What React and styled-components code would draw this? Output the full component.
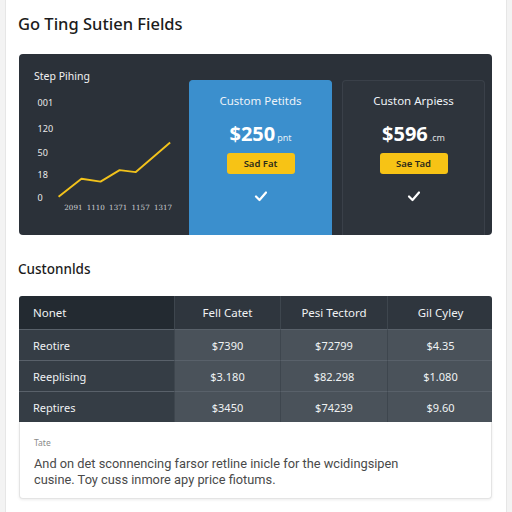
import React from 'react';
import styled, { createGlobalStyle } from 'styled-components';

const GlobalStyle = createGlobalStyle`
  html, body {
    margin: 0;
    padding: 0;
    background: #f3f3f3;
    font-family: 'Noto Sans', 'Open Sans', sans-serif;
  }
`;

const Page = styled.div`
  width: 502px;
  height: 512px;
  margin: 0 auto;
  background: #ffffff;
  border-left: 1px solid #e6e6e6;
  border-right: 1px solid #e6e6e6;
  box-sizing: border-box;
  padding: 12px 12px 0 12px;
  display: flex;
  flex-direction: column;
`;

const Title = styled.h1`
  margin: 0;
  font-size: 16.5px;
  font-weight: 500;
  color: #1b1b1b;
  line-height: 24px;
`;

const Panel = styled.div`
  margin: 18px 2px 0 1px;
  height: 181px;
  background: #2b3139;
  border-radius: 4px;
  display: flex;
  overflow: hidden;
`;

const ChartBox = styled.div`
  width: 170px;
  padding: 15px 0 0 15px;
  box-sizing: border-box;
  display: flex;
  flex-direction: column;
`;

const ChartTitle = styled.div`
  color: #f2f2f2;
  font-size: 10.5px;
  line-height: 14px;
`;

const Plan = styled.div`
  width: 143px;
  margin-top: 26px;
  margin-left: ${(p) => p.gap || 0}px;
  background: ${(p) => (p.featured ? '#3b8fcd' : '#2e343c')};
  border: 1px solid ${(p) => (p.featured ? '#3b8fcd' : '#3a4049')};
  border-bottom: none;
  border-radius: 4px 4px 0 0;
  box-sizing: border-box;
  display: flex;
  flex-direction: column;
  align-items: center;
  padding-top: 12px;
`;

const PlanName = styled.div`
  color: #eef3f8;
  font-size: 11.5px;
  line-height: 16px;
`;

const Price = styled.div`
  margin-top: 13px;
  color: #ffffff;
  font-size: 20px;
  font-weight: 700;
  line-height: 24px;
  span {
    font-size: 9px;
    font-weight: 400;
    margin-left: 2px;
    opacity: 0.85;
  }
`;

const Cta = styled.div`
  margin-top: 3px;
  width: 68px;
  height: 21px;
  border-radius: 3px;
  background: #f7c315;
  color: #2a2a1a;
  font-size: 9.5px;
  font-weight: 600;
  display: flex;
  align-items: center;
  justify-content: center;
`;

const Check = styled.svg`
  margin-top: 16px;
`;

const SectionTitle = styled.h2`
  margin: 24px 0 0 0;
  font-size: 13.5px;
  font-weight: 500;
  color: #1b1b1b;
  line-height: 20px;
`;

const Table = styled.div`
  margin: 17px 2px 0 1px;
  border-radius: 3px 3px 0 0;
  overflow: hidden;
  display: grid;
  grid-template-columns: 155px 106px 107px 106px;
`;

const Cell = styled.div`
  height: ${(p) => (p.head ? 33 : 31)}px;
  display: flex;
  align-items: center;
  justify-content: ${(p) => (p.first ? 'flex-start' : 'center')};
  padding-left: ${(p) => (p.first ? 14 : 0)}px;
  font-size: ${(p) => (p.head ? 11.5 : 11)}px;
  color: #f0f2f4;
  background: ${(p) =>
    p.head ? (p.first ? '#232a31' : '#2f363e') : p.first ? '#353d45' : '#4a525a'};
  border-left: ${(p) => (p.first ? 'none' : '1px solid #3e464e')};
  border-top: ${(p) => (p.head ? 'none' : '1px solid #59616a')};
  box-sizing: border-box;
`;

const Note = styled.div`
  margin: 0 2px 0 1px;
  height: 77px;
  background: #ffffff;
  border: 1px solid #e4e4e4;
  border-top: none;
  border-radius: 0 0 4px 4px;
  box-shadow: 0 1px 3px rgba(0, 0, 0, 0.08);
  box-sizing: border-box;
  padding: 15px 14px 0 14px;
`;

const NoteLabel = styled.div`
  font-size: 8.5px;
  color: #8a8a8a;
  line-height: 12px;
`;

const NoteText = styled.p`
  margin: 7px 0 0 0;
  font-family: Roboto, 'Noto Sans', sans-serif;
  font-size: 12.8px;
  color: #4a4a4a;
  line-height: 15.5px;
  width: 390px;
`;

const Chart = () => (
  <svg width="155" height="150" viewBox="0 0 155 150" style={{ marginTop: 9 }}>
    {[['001', 15], ['120', 42], ['50', 67], ['18', 90], ['0', 114]].map(([t, y]) => (
      <text key={t} x="0" y={y} fill="#e9e9e9" fontSize="9.5" fontFamily="Noto Sans, sans-serif">
        {t}
      </text>
    ))}
    <polyline
      points="22,110 46,91 66,94 86,82 103,84 139,53"
      fill="none"
      stroke="#f2c21b"
      strokeWidth="2"
      strokeLinejoin="round"
    />
    {['2091', '1110', '1371', '1157', '1317'].map((t, i) => (
      <text key={t} x={28 + i * 23.5} y="124" fill="#cfd2d6" fontSize="7.5" fontFamily="DejaVu Serif, serif">
        {t}
      </text>
    ))}
  </svg>
);

const CheckIcon = () => (
  <Check width="14" height="12" viewBox="0 0 14 12">
    <path d="M2 6.5 L5.5 10 L12 2.5" fill="none" stroke="#ffffff" strokeWidth="2.2" strokeLinecap="round" strokeLinejoin="round" />
  </Check>
);

const rows = [
  ['Reotire', '$7390', '$72799', '$4.35'],
  ['Reeplising', '$3.180', '$82.298', '$1.080'],
  ['Reptires', '$3450', '$74239', '$9.60'],
];

export default function App() {
  return (
    <>
      <GlobalStyle />
      <Page>
        <Title>Go Ting Sutien Fields</Title>
        <Panel>
          <ChartBox>
            <ChartTitle>Step Pihing</ChartTitle>
            <Chart />
          </ChartBox>
          <Plan featured>
            <PlanName>Custom Petitds</PlanName>
            <Price>$250<span>pnt</span></Price>
            <Cta>Sad Fat</Cta>
            <CheckIcon />
          </Plan>
          <Plan gap={10}>
            <PlanName>Custon Arpiess</PlanName>
            <Price>$596<span>.cm</span></Price>
            <Cta>Sae Tad</Cta>
            <CheckIcon />
          </Plan>
        </Panel>
        <SectionTitle>Custonnlds</SectionTitle>
        <Table>
          <Cell head first>Nonet</Cell>
          <Cell head>Fell Catet</Cell>
          <Cell head>Pesi Tectord</Cell>
          <Cell head>Gil Cyley</Cell>
          {rows.map((r) =>
            r.map((c, i) => (
              <Cell key={r[0] + i} first={i === 0}>
                {c}
              </Cell>
            ))
          )}
        </Table>
        <Note>
          <NoteLabel>Tate</NoteLabel>
          <NoteText>
            And on det sconnencing farsor retline inicle for the wcidingsipen cusine. Toy cuss inmore apy price fiotums.
          </NoteText>
        </Note>
      </Page>
    </>
  );
}
